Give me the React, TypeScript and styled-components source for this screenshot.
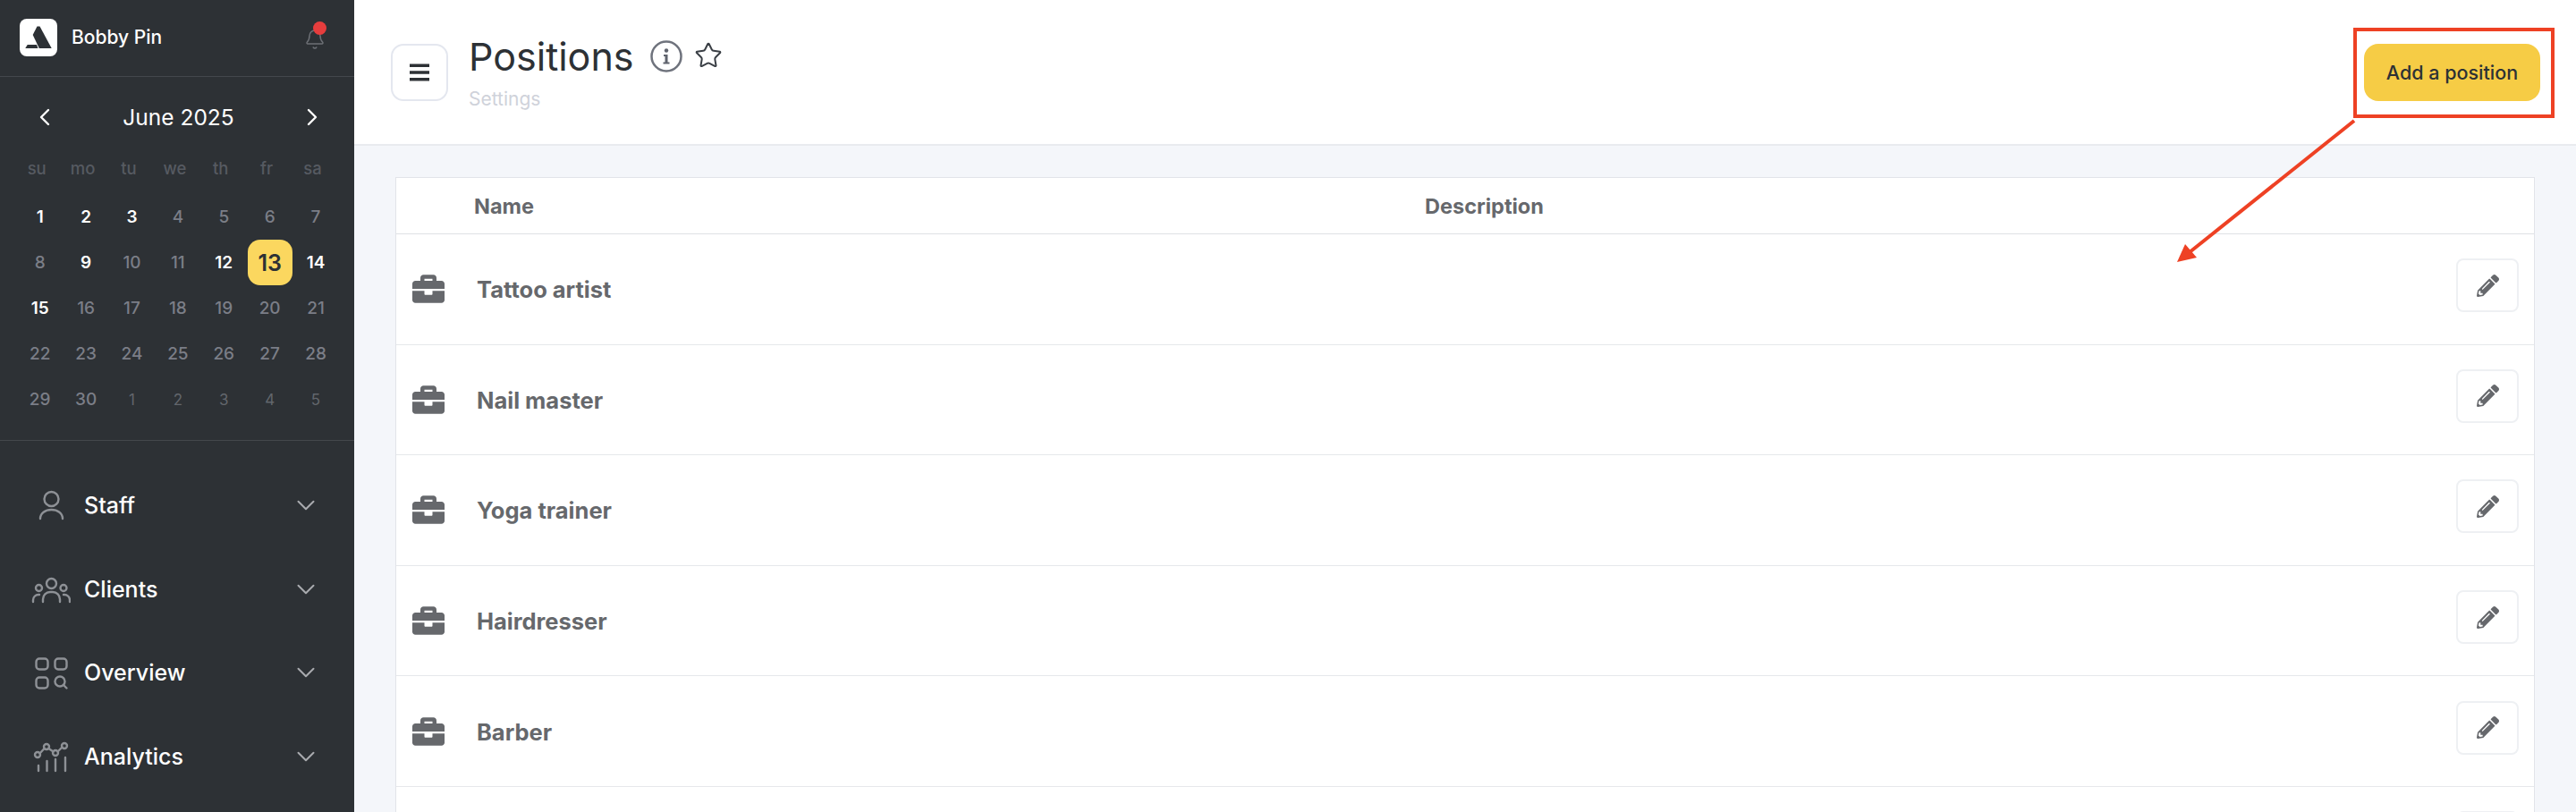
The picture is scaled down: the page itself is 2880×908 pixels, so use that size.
import React from 'react';
import styled, { createGlobalStyle } from 'styled-components';
import { Bell, ChevronDown, ChevronLeft, ChevronRight, Star } from 'lucide-react';
import { FaBriefcase, FaPencilAlt } from 'react-icons/fa';

const GlobalStyle = createGlobalStyle`
  html, body { margin: 0; padding: 0; }
  body { font-family: Inter, "Noto Sans", sans-serif; background: #f4f6fa; }
  * { box-sizing: border-box; }
`;

const Page = styled.div`
  position: relative;
  display: flex;
  width: 2880px;
  height: 908px;
  overflow: hidden;
`;

/* Sidebar */
const Sidebar = styled.aside`
  width: 396px;
  flex: none;
  background: #2d3135;
  color: #fff;
`;

const Brand = styled.div`
  height: 86px;
  padding: 0 32px 2px 22px;
  display: flex;
  align-items: center;
  gap: 16px;
  border-bottom: 1px solid #43474c;
`;

const BrandName = styled.span`
  font-size: 21px;
  font-weight: 500;
  flex: 1;
`;

const BellWrap = styled.div`
  position: relative;
  display: flex;
  margin-top: 4px;
  color: #6d7076;
`;

const RedDot = styled.span`
  position: absolute;
  top: -8px;
  right: -1px;
  width: 15px;
  height: 15px;
  border-radius: 50%;
  background: #e63d3d;
`;

const Calendar = styled.section`
  height: 407px;
  padding: 20px 17px 0 19px;
  border-bottom: 1px solid #43474c;
`;

const MonthRow = styled.div`
  height: 50px;
  padding: 0 14px 0 15px;
  display: flex;
  align-items: center;
  justify-content: space-between;
  font-size: 24.5px;
  font-weight: 400;
`;

const DayGrid = styled.div`
  display: grid;
  grid-template-columns: repeat(7, 51.4px);
  grid-auto-rows: 51px;
  margin-top: 10px;
`;

const WeekDay = styled.div`
  display: flex;
  align-items: center;
  justify-content: center;
  font-size: 18.5px;
  font-weight: 500;
  color: #565a61;
  height: 31px;
  align-self: start;
  margin: 6px 7px 0 0;
`;

const Day = styled.div<{ $kind: 'active' | 'muted' | 'outside' | 'today' }>`
  display: flex;
  align-items: center;
  justify-content: center;
  width: ${p => (p.$kind === 'today' ? '50px' : 'auto')};
  margin-left: ${p => (p.$kind === 'today' ? '0.7px' : '0')};
  border-radius: 14px;
  font-size: ${p => (p.$kind === 'today' ? '25px' : p.$kind === 'outside' ? '17px' : '19px')};
  font-weight: ${p => (p.$kind === 'active' || p.$kind === 'today' ? 600 : p.$kind === 'outside' ? 400 : 500)};
  color: ${p =>
    p.$kind === 'active' ? '#fff' : p.$kind === 'today' ? '#2d3135' : p.$kind === 'outside' ? '#62666c' : '#7b7e87'};
  background: ${p => (p.$kind === 'today' ? '#fbd75f' : 'transparent')};
`;

const Menu = styled.nav`
  padding-top: 25px;
`;

const MenuItem = styled.div`
  height: 93.7px;
  padding: 0 37px 0 35px;
  display: flex;
  align-items: center;
  gap: 15px;
  font-size: 25px;
  font-weight: 500;
  color: #fff;
`;

const MenuLabel = styled.span`
  flex: 1;
`;

const MenuIcon = styled.svg`
  width: 44px;
  height: 44px;
  flex: none;
  fill: none;
  stroke: #8e9196;
  stroke-width: 2.4;
  stroke-linecap: round;
  stroke-linejoin: round;
`;

/* Main */
const Main = styled.main`
  flex: 1;
  min-width: 0;
  display: flex;
  flex-direction: column;
`;

const Header = styled.header`
  height: 163px;
  flex: none;
  padding: 0 40px 0 41px;
  display: flex;
  align-items: flex-start;
  background: #fff;
  border-bottom: 2px solid #e9ebef;
`;

const MenuButton = styled.button`
  width: 64px;
  height: 64px;
  margin-top: 49px;
  padding: 0;
  display: flex;
  align-items: center;
  justify-content: center;
  background: #fff;
  border: 2px solid #e4e7ef;
  border-radius: 14px;
`;

const TitleBlock = styled.div`
  margin-left: 23px;
  flex: 1;
`;

const TitleRow = styled.div`
  display: flex;
  align-items: center;
  height: 56px;
  margin-top: 35px;
`;

const Title = styled.h1`
  margin: 0;
  font-size: 43px;
  font-weight: 400;
  color: #2d3135;
`;

const InfoIcon = styled.svg`
  width: 36px;
  height: 36px;
  margin-left: 18px;
`;

const StarIcon = styled(Star)`
  margin-left: 13px;
  margin-bottom: 2px;
  color: #3a3f45;
`;

const SubTitle = styled.div`
  margin-top: 7px;
  font-size: 21px;
  color: #cfd2da;
`;

const AddButton = styled.button`
  width: 197px;
  height: 64px;
  margin-top: 49px;
  border: 0;
  border-radius: 16px;
  background: #f6cc45;
  font-family: inherit;
  font-size: 21.5px;
  font-weight: 500;
  color: #2d3135;
`;

const Content = styled.div`
  flex: 1;
  min-height: 0;
  padding: 35px 46px 0;
  background: #f4f6fa;
`;

const Table = styled.div`
  background: #fff;
  border: 1px solid #e2e4e9;
  border-bottom: 0;
`;

const HeadRow = styled.div`
  height: 63px;
  display: flex;
  align-items: center;
  padding-left: 87px;
  border-bottom: 1px solid #dfe1e5;
  font-size: 23.5px;
  font-weight: 700;
  color: #66686c;
`;

const NameHead = styled.div`
  width: 1063px;
`;

const Row = styled.div`
  height: 123.6px;
  padding: 0 17px 0 18px;
  display: flex;
  align-items: center;
  border-bottom: 1px solid #e6e8eb;
  color: #66686c;
`;

const RowName = styled.div`
  flex: 1;
  margin-left: 36px;
  padding-top: 1px;
  font-size: 25.5px;
  font-weight: 700;
`;

const EditButton = styled.button`
  width: 70px;
  height: 60px;
  margin-bottom: 8px;
  padding: 0;
  display: flex;
  align-items: center;
  justify-content: center;
  background: #fff;
  color: #66686c;
  border: 2px solid #eef0f3;
  border-radius: 8px;
`;

/* Red annotation drawn over the page */
const Annotation = styled.svg`
  position: absolute;
  inset: 0;
  width: 2880px;
  height: 908px;
  pointer-events: none;
`;

type DayKind = 'active' | 'muted' | 'outside' | 'today';

const weekDays = ['su', 'mo', 'tu', 'we', 'th', 'fr', 'sa'];
const activeDays = [1, 2, 3, 9, 12, 14, 15];

const days: { label: number; kind: DayKind }[] = [
  ...Array.from({ length: 30 }, (_, i) => {
    const label = i + 1;
    const kind: DayKind = label === 13 ? 'today' : activeDays.includes(label) ? 'active' : 'muted';
    return { label, kind };
  }),
  ...[1, 2, 3, 4, 5].map(label => ({ label, kind: 'outside' as DayKind })),
];

const positions = ['Tattoo artist', 'Nail master', 'Yoga trainer', 'Hairdresser', 'Barber', ''];

const StaffIcon = () => (
  <MenuIcon viewBox="0 0 44 44">
    <circle cx="22.5" cy="15" r="8" />
    <path d="M10 37c0-6 5.500-10 12.500-10S35 31 35 37" />
  </MenuIcon>
);

const ClientsIcon = () => (
  <MenuIcon viewBox="0 0 44 44">
    <circle cx="22.500" cy="15.500" r="5.500" />
    <circle cx="8.500" cy="20.500" r="3.500" />
    <circle cx="36" cy="20.500" r="3.500" />
    <path d="M13 36v-3a8 8 0 0 1 8-8h3a8 8 0 0 1 8 8v3" />
    <path d="M2 36v-2a6 6 0 0 1 6-6h1" />
    <path d="M43 36v-2a6 6 0 0 0-6-6h-1" />
  </MenuIcon>
);

const OverviewIcon = () => (
  <MenuIcon viewBox="0 0 44 44">
    <rect x="5.500" y="6.500" width="13" height="12" rx="3.500" />
    <rect x="26.500" y="6.500" width="13" height="12" rx="3.500" />
    <rect x="5.500" y="27.500" width="13" height="12" rx="3.500" />
    <circle cx="32" cy="32" r="5.500" />
    <path d="M36 36l3.500 3.500" />
  </MenuIcon>
);

const AnalyticsIcon = () => (
  <MenuIcon viewBox="0 0 44 44">
    <path d="M9.500 18.500l5-5.500M19.500 13l5 3.500M29.500 16.500l5-5" />
    <circle cx="7" cy="20" r="3" />
    <circle cx="17" cy="11" r="3" />
    <circle cx="27" cy="18" r="3" />
    <circle cx="37" cy="10" r="3" />
    <path d="M8 32v6M17.500 27v11M27 25v13M38 23v15" />
  </MenuIcon>
);

const menuItems = [
  { label: 'Staff', icon: <StaffIcon /> },
  { label: 'Clients', icon: <ClientsIcon /> },
  { label: 'Overview', icon: <OverviewIcon /> },
  { label: 'Analytics', icon: <AnalyticsIcon /> },
];

const App: React.FC = () => {
  return (
    <Page>
      <GlobalStyle />
      <Sidebar>
        <Brand>
          <svg width="42" height="42" viewBox="0 0 42 42">
            <rect width="42" height="42" rx="8" fill="#fff" />
            <path d="M19.500 8.500h3l13.200 24.500H21.800L14.700 18z" fill="#2d3135" />
            <path d="M8.700 29H19l1.500 4H6.300z" fill="#2d3135" />
          </svg>
          <BrandName>Bobby Pin</BrandName>
          <BellWrap>
            <Bell size={24} strokeWidth={1.5} />
            <RedDot />
          </BellWrap>
        </Brand>

        <Calendar>
          <MonthRow>
            <ChevronLeft size={32} strokeWidth={1.8} />
            <span>June 2025</span>
            <ChevronRight size={32} strokeWidth={1.8} />
          </MonthRow>
          <DayGrid>
            {weekDays.map(d => (
              <WeekDay key={d}>{d}</WeekDay>
            ))}
            {days.map((d, i) => (
              <Day key={i} $kind={d.kind}>
                {d.label}
              </Day>
            ))}
          </DayGrid>
        </Calendar>

        <Menu>
          {menuItems.map(item => (
            <MenuItem key={item.label}>
              {item.icon}
              <MenuLabel>{item.label}</MenuLabel>
              <ChevronDown size={34} strokeWidth={1.4} color="#a9abaf" />
            </MenuItem>
          ))}
        </Menu>
      </Sidebar>

      <Main>
        <Header>
          <MenuButton>
            <svg width="24" height="22" viewBox="0 0 24 22" fill="#2d3135">
              <rect x="1" y="1.500" width="22" height="3.500" />
              <rect x="1" y="9.250" width="22" height="3.500" />
              <rect x="1" y="17" width="22" height="3.500" />
            </svg>
          </MenuButton>
          <TitleBlock>
            <TitleRow>
              <Title>Positions</Title>
              <InfoIcon viewBox="0 0 36 36">
                <circle cx="18" cy="18" r="16.500" fill="none" stroke="#6f737d" strokeWidth="2.500" />
                <circle cx="18" cy="11.500" r="2.200" fill="#5f636d" />
                <path d="M15 16h4.500v8.500H21.500v2h-7v-2h2v-6.500H15z" fill="#5f636d" />
              </InfoIcon>
              <StarIcon size={32} strokeWidth={1.5} />
            </TitleRow>
            <SubTitle>Settings</SubTitle>
          </TitleBlock>
          <AddButton>Add a position</AddButton>
        </Header>

        <Content>
          <Table>
            <HeadRow>
              <NameHead>Name</NameHead>
              <div>Description</div>
            </HeadRow>
            {positions.map((name, i) => (
              <Row key={i}>
                <FaBriefcase size={36} />
                <RowName>{name}</RowName>
                <EditButton>
                  <FaPencilAlt size={25} />
                </EditButton>
              </Row>
            ))}
          </Table>
        </Content>
      </Main>

      <Annotation viewBox="0 0 2880 908">
        <rect x="2633" y="33" width="221" height="97" fill="none" stroke="#ee4124" strokeWidth="4" />
        <path d="M2632 135L2448 282" stroke="#ee4124" strokeWidth="4" fill="none" />
        <path d="M2434 293L2443 273L2456 288Z" fill="#ee4124" />
      </Annotation>
    </Page>
  );
};

export default App;
